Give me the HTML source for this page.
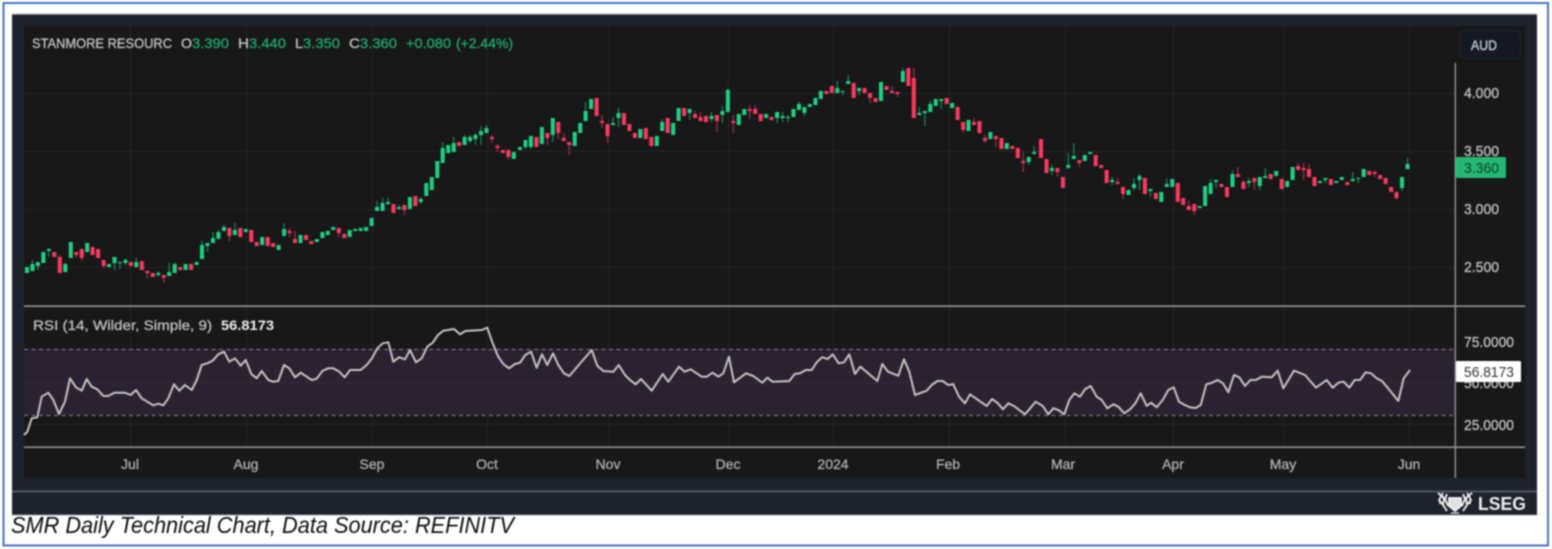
<!DOCTYPE html>
<html lang="en"><head><meta charset="utf-8"><title>SMR Daily Technical Chart</title>
<style>
html,body{margin:0;padding:0;background:#fff;width:1552px;height:549px;overflow:hidden}
svg{display:block;position:absolute;left:0;top:0}
#chart{filter:blur(.75px)}
text{font-family:"Liberation Sans",sans-serif}
.t{stroke:currentColor;stroke-width:.3px}
</style></head><body>
<svg id="chart" width="1552" height="549" viewBox="0 0 1552 549" xmlns="http://www.w3.org/2000/svg">
<rect width="1552" height="549" fill="#fff"/>
<rect x="3.5" y="3" width="1544.5" height="542.5" fill="none" stroke="#4472c4" stroke-width="2"/>
<rect x="12" y="14" width="1525" height="501" fill="#1e222d"/>
<path d="M12 14.3H1537M12 515H1537" stroke="#9a9a9a" stroke-width="1" fill="none"/>
<rect x="24" y="26" width="1501" height="452" fill="#181818"/>
<path d="M12 491.5H1537" stroke="#5f6670" stroke-width="1.4"/>
<path id="grid" fill="none" stroke="#252525" stroke-width="1" d="M24 93.5H1455M24 151.5H1455M24 209.5H1455M24 267.5H1455M24 382.5H1455M24 424.5H1455M130.5 26V447M246.5 26V447M372.5 26V447M487.5 26V447M608.5 26V447M728.5 26V447M833.5 26V447M949.5 26V447M1065.5 26V447M1173.5 26V447M1283.5 26V447M1409.5 26V447"/>
<rect x="24" y="349" width="1431" height="66" fill="#2a2230"/>
<path d="M24 382.5H1455" stroke="#2f2a35"/>
<path d="M24 349.5H1455M24 415.5H1455" stroke="#85828a" stroke-width="1.1" stroke-dasharray="4 3.5"/>
<path d="M24 306.2H1525M24 447.2H1525" stroke="#949494" stroke-width="1.6"/>
<path d="M1455.3 63V478" stroke="#949494" stroke-width="1.4"/>
<path id="wg" stroke="#1d8f5e" stroke-width="1.1" fill="none"/>
<path id="wr" stroke="#a83348" stroke-width="1.1" fill="none"/>
<path id="bg" stroke="#1fd183" stroke-width="4" fill="none"/>
<path id="br" stroke="#fb3a60" stroke-width="4" fill="none"/>
<path id="rsi" fill="none" stroke="#c4c4c4" stroke-width="2" stroke-linejoin="round"/>
<g font-size="14" fill="#c4c4c4" color="#c4c4c4" class="t">
<text x="32" y="48" textLength="140" lengthAdjust="spacingAndGlyphs">STANMORE RESOURC</text>
<text x="181" y="48" textLength="11" lengthAdjust="spacingAndGlyphs">O</text>
<text x="238" y="48" textLength="11" lengthAdjust="spacingAndGlyphs">H</text>
<text x="295" y="48" textLength="8" lengthAdjust="spacingAndGlyphs">L</text>
<text x="349" y="48" textLength="11" lengthAdjust="spacingAndGlyphs">C</text>
</g>
<g font-size="14" fill="#1fa86e" color="#1fa86e" class="t">
<text x="192" y="48" textLength="37" lengthAdjust="spacingAndGlyphs">3.390</text>
<text x="249" y="48" textLength="37" lengthAdjust="spacingAndGlyphs">3.440</text>
<text x="303" y="48" textLength="37" lengthAdjust="spacingAndGlyphs">3.350</text>
<text x="360" y="48" textLength="37" lengthAdjust="spacingAndGlyphs">3.360</text>
<text x="406" y="48" textLength="45" lengthAdjust="spacingAndGlyphs">+0.080</text>
<text x="456" y="48" textLength="57" lengthAdjust="spacingAndGlyphs">(+2.44%)</text>
</g>
<rect x="1459.5" y="30.5" width="61" height="28" rx="5" fill="#141923" stroke="#1f2530"/>
<text x="1471" y="50" font-size="13.5" fill="#d0d3d8" color="#d0d3d8" class="t" textLength="26" lengthAdjust="spacingAndGlyphs">AUD</text>
<g font-size="15" fill="#c2c2c2" color="#c2c2c2" class="t">
<text x="1464" y="98" textLength="35" lengthAdjust="spacingAndGlyphs">4.000</text>
<text x="1464" y="156" textLength="35" lengthAdjust="spacingAndGlyphs">3.500</text>
<text x="1464" y="214" textLength="35" lengthAdjust="spacingAndGlyphs">3.000</text>
<text x="1464" y="272" textLength="35" lengthAdjust="spacingAndGlyphs">2.500</text>
<text x="1464" y="347" textLength="50" lengthAdjust="spacingAndGlyphs">75.0000</text>
<text x="1464" y="388" textLength="50" lengthAdjust="spacingAndGlyphs">50.0000</text>
<text x="1464" y="430" textLength="50" lengthAdjust="spacingAndGlyphs">25.0000</text>
</g>
<rect x="1456" y="157" width="50" height="21" rx="1.5" fill="#25b873"/>
<text x="1464" y="173" font-size="15" fill="#123d2a" textLength="35" lengthAdjust="spacingAndGlyphs">3.360</text>
<rect x="1456" y="361" width="65" height="21" rx="1" fill="#fff"/>
<text x="1464" y="377" font-size="15" fill="#333" textLength="50" lengthAdjust="spacingAndGlyphs">56.8173</text>
<text x="33" y="330" font-size="14" fill="#c0c0c0" color="#c0c0c0" class="t" textLength="179" lengthAdjust="spacingAndGlyphs">RSI (14, Wilder, Simple, 9)</text>
<text x="221" y="330" font-size="14" font-weight="bold" fill="#eeeeee" textLength="53" lengthAdjust="spacingAndGlyphs">56.8173</text>
<g font-size="14" fill="#b0b0b0" color="#b0b0b0" class="t" text-anchor="middle">
<text x="130" y="469">Jul</text><text x="246" y="469">Aug</text><text x="372" y="469">Sep</text><text x="487" y="469">Oct</text><text x="608" y="469">Nov</text><text x="728" y="469">Dec</text><text x="833" y="469">2024</text><text x="948" y="469">Feb</text><text x="1063" y="469">Mar</text><text x="1173" y="469">Apr</text><text x="1283" y="469">May</text><text x="1409" y="469">Jun</text>
</g>
<g fill="none" stroke="#f4f4f4" stroke-width="1.8">
<path d="M1438 493l6 5-1 7 4 6M1443 493l-4 7 4 5M1447 494l-2 5 3 7M1472 493l-6 5 1 7-4 6M1467 493l4 7-4 5M1463 494l2 5-3 7M1439 503h5M1466 503h5"/>
<path d="M1449 498h12v8l-6 5-6-5z" fill="#e0e0e0"/>
<path d="M1451 513h8" stroke-width="1.2"/>
</g>
<text x="1478" y="510" font-size="18" font-weight="bold" fill="#f0f0f0" textLength="48" lengthAdjust="spacingAndGlyphs">LSEG</text>
<text x="11" y="533" font-size="23" font-style="italic" fill="#0c0c0c" textLength="503" lengthAdjust="spacingAndGlyphs">SMR Daily Technical Chart, Data Source: REFINITV</text>
</svg>
<script>
var A="g267,273 g264,271,260 g262,266,262,270 g252,263 g249,251,248,257 r252,257 r257,273,255 g264,272,263 g242,258 r252,255,252,258 r249,258,249,261 g243,252 r247,255 r249,258 r260,266,260,268 g264,267 g257,263,257,270 g262,263,262,269 g260,263,258,265 r262,266 g262,267,258 r261,270 r271,273,271,278 r273,277 g273,275,271,277 r275,278,275,283 g272,276,263 g264,273,263 r267,270 g264,270 r264,270 g262,265 g245,259,241 g243,246,243,252 g238,243,232 g232,239,230 g227,231,225 r228,236,228,241 g230,235,223 r228,237 g229,232 r230,242 r242,246 g237,245 r237,246 r243,247 g245,250 g229,236,223 r231,233,228,237 r239,243,231 g235,243 r235,240 r241,244 g239,242 g232,238 g231,235 g227,230 r228,233,228,237 r234,238 g230,237 g229,231 g228,231 g227,231 g218,226 g207,211,201 g203,211,198 g202,204,198,205 r204,213 g207,209,205,210 r205,210,205,215 g197,209 r196,206 g199,202,197,204 g183,196 g177,190 g161,178 g148,163,142 g145,153 g143,152,137 r142,146 g137,145,135 g137,141,135,143 g135,139,133,145 g131,135,126,145 g128,133,125 r137,139,135,143 r146,148,144,152 r150,153 r150,157,150,160 g152,159";
var B="g147,150 g140,147,140,149 g136,147,136,149 r137,147 g127,144 r133,138,133,145 g118,135,118,142 r122,133,122,139 r138,141,133 r142,145,142,155 g132,146 g123,133 g111,121,102 g99,109 r98,116 r121,123,115,128 r124,136,124,143 g123,125,117 g113,118,108,127 r113,125 r124,131 r133,138 g129,138 r128,139 r137,146 g136,146 g122,131,119 r118,133 g123,135 g108,121 r108,116 g109,113,109,120 r114,118,111 r117,121,112 r116,122 g116,119,112,122 r115,121,115,132 g111,115,106,123 g90,112,88 r121,123,115,133 g114,125 g109,115 r109,111,105,119 r109,114,105 r114,121 g114,118 r117,120 g112,118,112,123 g116,118,112,122 g117,118,115,122 g109,117 g104,110,102 g107,113,107,116 g104,107 g98,105 g91,99 r91,94 r86,93 g88,93,81 g91,92,91,95 g81,84,75 r83,98 g88,91,88,95 r88,93 r93,98,93,103 r98,102 g82,101 r86,90 r91,93,86 r92,94,92,97 g71,82,68 r68,86 r78,118,68 g113,115,107 g111,113,111,126 g104,112,101 g99,106 g99,101,99,109 r98,104 g103,108 r107,120 r122,130,122,133 g120,131 r122,125,118 r121,133 r138,141,135,143 g132,139 r136,139,136,147 r138,149 g143,149 r146,149 r148,158 r161,163,152,172 g157,162,157,165 g152,154,146";
var C="r139,158 r159,173 g168,171,165,175 r168,172,168,177 r177,188 g165,168,153 g156,159,143 r160,163,160,167 g155,161 g152,154 r155,166 r165,168 r170,183 g180,182,177,185 r182,184,178 r187,194,187,199 g190,195 g184,188,178,190 g176,180,174,190 r178,194 g189,191,189,197 r193,199 g192,202 g184,187,178 g179,187 r183,202 r198,205 r206,210,201 r204,211,204,215 g206,208 g186,206 g183,194,179 g180,182,180,188 r184,187 r187,197 g174,187,170 r174,177,167 r182,189,180 g181,183,178,187 r178,182,178,190 g177,186,177,190 g176,178,168 r174,179 g171,176 r179,189 g181,187 g167,180 r166,170,163 r168,170,163,180 r169,177,164 r177,186 g181,183 g178,180,178,183 r179,185 g181,183 g177,180 r182,185 g179,181,172,182 g178,179,178,183 g169,177 r171,175 r172,174,170,177 r175,179 r178,184 r187,192 r192,198,192,200 g177,188,177,191 g164,169,158";
var p={g:"",r:"",G:"",R:""};
function draw(s,x0){s.split(" ").forEach(function(e,i){var c=e[0],n=e.slice(1).split(",").map(Number),x=(x0+i*5.47).toFixed(1),t=n[0],b=n[1],wt=n[2]||t,wb=n[3]||b;
p[c]+="M"+x+" "+t+"V"+b;
p[c.toUpperCase()]+="M"+x+" "+wt+"V"+wb;});}
draw(A,27);draw(B,520);draw(C,1041);
document.getElementById("bg").setAttribute("d",p.g);document.getElementById("br").setAttribute("d",p.r);
document.getElementById("wg").setAttribute("d",p.G);document.getElementById("wr").setAttribute("d",p.R);
var R1="72,405 82,395 95,355 112,352 125,290 145,278 160,300 177,342 195,305 210,235 228,262 245,272 260,237 275,260 292,268 310,288 325,288 343,278 375,278 392,285 408,270 425,295 442,305 460,316 475,311 490,316 505,295 522,253 538,272 555,255 575,270 590,240 605,195 622,190 638,182 655,163 672,155 688,185 705,175 722,197 737,180 754,222 770,235 785,213 805,240 820,245 835,243 852,195 868,205 885,232 902,218 935,240 950,236 968,212 985,205 1000,205 1018,215 1034,232 1050,210 1082,210 1100,195 1116,175 1132,145 1148,130 1165,127 1180,185 1197,172 1215,178 1230,150 1248,187 1265,175 1282,140 1298,128 1314,105 1330,92 1362,87 1380,103 1396,93 1445,90 1462,83 1478,130 1495,170 1510,192 1527,205 1545,192";
var R2="0,188 16,165 33,155 50,203 66,163 82,195 99,160 115,195 132,220 148,228 215,150 232,197 250,213 280,215 296,195 315,225 330,240 347,253 363,237 395,272 428,222 445,245 477,200 494,215 512,208 545,230 560,230 578,218 595,230 610,220 627,170 642,247 678,220 700,228 727,248 742,233 758,245 808,243 824,222 840,220 857,210 875,210 890,187 906,172 923,177 938,163 956,190 972,187 988,163 1005,222 1021,200 1072,243 1087,192 1104,215 1135,227 1152,178 1168,215 1185,285 1220,272 1235,255 1252,243 1268,243 1285,255 1300,253 1317,290 1335,310 1350,283 1400,318 1416,297 1432,308 1449,328 1465,310 1482,318 1515,343";
var R3="17,305 38,318 55,343 70,325 85,330 103,343 118,300 133,280 150,290 165,268 182,258 200,290 215,300 232,325 250,313 265,320 283,340 300,328 316,310 332,280 350,318 363,308 380,322 398,300 415,270 431,262 447,305 464,315 480,322 497,324 512,315 529,253 546,248 563,240 579,250 595,277 612,225 628,232 645,258 661,240 678,240 695,230 725,232 743,212 760,265 792,212 825,225 858,263 890,240 908,263 925,248 941,245 958,263 974,240 990,240 1007,217 1023,220 1040,235 1056,243 1072,262 1105,303 1121,235 1140,210";
function pts(s,x0){return s.split(" ").map(function(q){var a=q.split(",");return (x0+a[0]/3).toFixed(1)+" "+(300+a[1]/3).toFixed(1);});}
document.getElementById("rsi").setAttribute("d","M"+pts(R1,0).concat(pts(R2,520),pts(R3,1030)).join("L"));
</script>
</body></html>
